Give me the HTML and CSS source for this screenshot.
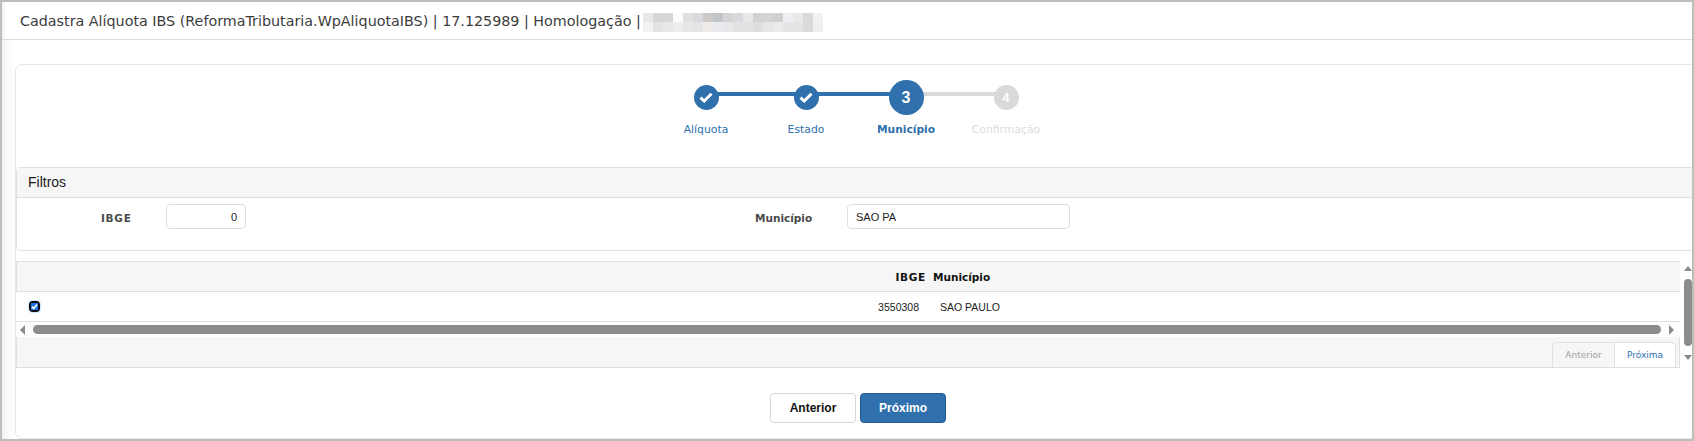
FILE: index.html
```html
<!DOCTYPE html>
<html lang="pt-BR">
<head>
<meta charset="utf-8">
<title>Cadastra Alíquota IBS</title>
<link rel="stylesheet" href="styles.css">
</head>
<body>
<div class="frame">
  <header class="topbar">
    <span class="title">Cadastra Alíquota IBS (ReformaTributaria.WpAliquotaIBS) | 17.125989 | Homologação |</span>
    <span class="redacted"></span>
  </header>
  <main class="content">
    <section class="card">
      <ol class="steps">
        <li class="step done">
          <span class="dot"><svg width="14" height="11" viewBox="0 0 14 11"><path d="M1.5 5.6 5.2 9 12.5 1.8" fill="none" stroke="#fff" stroke-width="3"/></svg></span>
          <span class="step-label">Alíquota</span>
        </li>
        <li class="step done">
          <span class="dot"><svg width="14" height="11" viewBox="0 0 14 11"><path d="M1.5 5.6 5.2 9 12.5 1.8" fill="none" stroke="#fff" stroke-width="3"/></svg></span>
          <span class="step-label">Estado</span>
        </li>
        <li class="step current">
          <span class="dot">3</span>
          <span class="step-label">Município</span>
        </li>
        <li class="step todo">
          <span class="dot">4</span>
          <span class="step-label">Confirmação</span>
        </li>
      </ol>

      <section class="filters">
        <h2 class="filters-title">Filtros</h2>
        <div class="filters-body">
          <label class="field-label label-ibge">IBGE</label>
          <input class="input input-ibge" type="text" value="0">
          <label class="field-label label-mun">Município</label>
          <input class="input input-mun" type="text" value="SAO PA">
        </div>
      </section>

      <div class="grid-wrap">
        <div class="grid">
          <div class="grid-head">
            <span class="col-check"></span>
            <span class="col-ibge">IBGE</span>
            <span class="col-mun">Município</span>
          </div>
          <div class="grid-row">
            <span class="col-check"><span class="check"><svg width="7" height="7" viewBox="0 0 8 8"><rect width="8" height="8" fill="#1a73e8"/><path d="M1 4.2 3.1 6.3 7 1.6" fill="none" stroke="#fff" stroke-width="1.8"/></svg></span></span>
            <span class="col-ibge">3550308</span>
            <span class="col-mun">SAO PAULO</span>
          </div>
          <div class="hscroll">
            <span class="arrow arrow-left"></span>
            <span class="hthumb"></span>
            <span class="arrow arrow-right"></span>
          </div>
          <div class="pager">
            <span class="tab tab-prev">Anterior</span>
            <span class="tab tab-next">Próxima</span>
          </div>
        </div>
        <div class="vscroll">
          <span class="arrow arrow-up"></span>
          <span class="vthumb"></span>
          <span class="arrow arrow-down"></span>
        </div>
      </div>

      <div class="actions">
        <button class="btn btn-default" type="button">Anterior</button>
        <button class="btn btn-primary" type="button">Próximo</button>
      </div>
    </section>
  </main>
</div>
</body>
</html>
```

FILE: styles.css
```css
* { box-sizing: border-box; }
html, body { margin: 0; padding: 0; height: 100%; overflow: hidden; }
body { background: #fff; font-family: "Liberation Sans", Arial, sans-serif; }

.frame {
  width: 1694px;
  height: 441px;
  border: 2px solid #bdbdbd;
  display: flex;
  flex-direction: column;
  overflow: hidden;
  background: #fff;
}

.topbar {
  height: 38px;
  flex: none;
  border-bottom: 1px solid #dcdcdc;
  display: flex;
  align-items: center;
  padding-left: 18px;
  background: linear-gradient(90deg, #f0f0f0, #fff 4px);
}
.title {
  font-family: "DejaVu Sans", Verdana, sans-serif;
  font-size: 14.3px;
  color: #3c3c3c;
  white-space: nowrap;
}
.redacted {
  margin: 3px 0 0 2px;
  width: 180px;
  height: 19px;
  background-color: #eee;
  background-image:
    linear-gradient(90deg, #e8e8e6 0 10px, #d6d6d6 10px 30px, #fdfdfb 30px 40px, #e0e0e0 40px 50px, #d8d9dc 50px 60px, #cdc9c6 60px 70px, #bfc5c9 70px 80px, #d5d4d5 80px 90px, #d8d9dc 90px 100px, #e8e8e6 100px 110px, #d2d2d2 110px 120px, #d4d4d2 120px 130px, #d2d0cf 130px 140px, #eeeff2 140px 150px, #eae8e6 150px 160px, #dcdad9 160px 170px, #eff1f2 170px 180px),
    linear-gradient(90deg, #f2f2f2 0 10px, #e2e4e2 10px 20px, #e8e8e6 20px 30px, #eeeeec 30px 40px, #e6e6e6 40px 50px, #e2e4e6 50px 60px, #f0ece8 60px 70px, #e8eaee 70px 80px, #e8e8ea 80px 90px, #e2e2e2 90px 110px, #dedede 110px 120px, #e6e6e4 120px 130px, #eaeae8 130px 140px, #e6e4e2 140px 160px, #d8dadc 160px 170px, #eef0ee 170px 180px);
  background-size: 100% 9px, 100% 10px;
  background-position: 0 0, 0 9px;
  background-repeat: no-repeat;
}

.content {
  flex: 1;
  min-height: 0;
  padding: 24px 0 0 13px;
  background: linear-gradient(90deg, #f2f2f2, #fafafa 6px, #fff 13px);
}

.card {
  width: 1700px;
  height: 375px;
  background: #fff;
  border: 1px solid #e8e8e8;
  border-radius: 7px;
}

.steps {
  list-style: none;
  margin: 0;
  padding: 20px 0 0 640px;
  height: 102px;
  display: flex;
}
.step {
  width: 100px;
  height: 60px;
  position: relative;
  display: flex;
  flex-direction: column;
  align-items: center;
}
.step::before {
  content: "";
  position: absolute;
  left: -50px;
  top: 7px;
  width: 100px;
  height: 4px;
  background: #2f70ad;
}
.step:first-child::before { display: none; }
.step.todo::before { background: #d9d9d9; }
.dot {
  position: relative;
  z-index: 1;
  width: 25px;
  height: 25px;
  border-radius: 50%;
  background: #2f70ad;
  color: #fff;
  font: bold 12.5px "Liberation Sans", Arial, sans-serif;
  display: flex;
  align-items: center;
  justify-content: center;
  margin-bottom: 13px;
  flex: none;
}
.current .dot {
  width: 35px;
  height: 35px;
  font-size: 16px;
  margin-top: -5px;
  margin-bottom: 8px;
}
.todo .dot { background: #d9d9d9; }
.step-label {
  font-family: "DejaVu Sans", Verdana, sans-serif;
  font-size: 10.8px;
  line-height: 13px;
  color: #2f70ad;
  white-space: nowrap;
}
.current .step-label { font-size: 10.7px; font-weight: bold; }
.todo .step-label { color: #dcdcdc; }

.filters {
  height: 84px;
  border: 1px solid #e0e0e0;
  border-radius: 4px;
}
.filters-title {
  margin: 0;
  height: 30px;
  padding-left: 11px;
  background: #f6f6f6;
  border-bottom: 1px solid #e0e0e0;
  font: normal 14px/28px "Liberation Sans", Arial, sans-serif;
  color: #1a1a1a;
}
.filters-body {
  display: flex;
  align-items: flex-start;
  padding-top: 6px;
}
.field-label {
  font-family: "DejaVu Sans", Verdana, sans-serif;
  font-weight: bold;
  font-size: 10.5px;
  line-height: 25px;
  margin-top: 2px;
  color: #4a4a4a;
}
.label-ibge { margin-left: 84px; width: 31px; letter-spacing: .7px; white-space: nowrap; }
.input {
  height: 25px;
  border: 1px solid #dedede;
  border-radius: 4px;
  background: #fff;
  font: 11px "Liberation Sans", Arial, sans-serif;
  color: #222;
  outline: none;
  padding: 0 8px;
}
.input-ibge { margin-left: 34px; width: 80px; text-align: right; }
.label-mun { margin-left: 509px; width: 58px; }
.input-mun { margin-left: 34px; width: 223px; }

.grid-wrap {
  margin-top: 10px;
  display: flex;
  align-items: flex-start;
}
.grid { width: 1664px; flex: none; }
.grid-head {
  height: 31px;
  display: flex;
  align-items: center;
  background: #f6f6f6;
  border: 1px solid #e0e0e0;
  border-right: 0;
  font: bold 10.5px "DejaVu Sans", Verdana, sans-serif;
  color: #111;
}
.col-check { flex: none; }
.grid-head .col-check { width: 808px; }
.col-ibge { width: 101px; flex: none; text-align: right; white-space: nowrap; }
.grid-head .col-ibge { letter-spacing: .7px; }
.col-mun { white-space: nowrap; }
.grid-head .col-mun { margin-left: 7px; }
.grid-row {
  height: 30px;
  display: flex;
  align-items: center;
  border-bottom: 1px solid #e0e0e0;
  font: 10.5px "Liberation Sans", Arial, sans-serif;
  color: #222;
}
.grid-row .col-check { width: 809px; padding-left: 13px; display: flex; }
.grid-row .col-ibge { padding-right: 7px; }
.grid-row .col-mun { padding-left: 14px; }
.check {
  width: 11px;
  height: 11px;
  border: 2px solid #0b0b14;
  border-radius: 3px;
  outline: 1px solid #cfe6fb;
  display: flex;
  overflow: hidden;
}

.hscroll {
  height: 15px;
  display: flex;
  align-items: center;
  background: #fdfdfd;
}
.arrow { width: 0; height: 0; flex: none; border-style: solid; border-color: transparent; }
.arrow-left { margin-left: 4px; border-width: 5px 5px 5px 0; border-right-color: #8c8c8c; }
.hthumb { margin-left: 8px; width: 1628px; height: 9px; border-radius: 5px; background: #8c8c8c; }
.arrow-right { margin-left: 8px; border-width: 5px 0 5px 5px; border-left-color: #8c8c8c; }

.pager {
  height: 31px;
  background: #f6f6f6;
  border: 1px solid #e0e0e0;
  border-top: 0;
  display: flex;
  justify-content: flex-end;
  align-items: flex-end;
  padding-right: 3px;
}
.tab {
  width: 62px;
  height: 25px;
  display: flex;
  align-items: center;
  justify-content: center;
  border: 1px solid #e0e0e0;
  border-bottom: 0;
  font: 9px "DejaVu Sans", Verdana, sans-serif;
}
.tab-prev { color: #a0a0a0; background: #f6f6f6; border-radius: 5px 0 0 0; border-right: 0; }
.tab-next { color: #2f70ad; background: #fff; border-radius: 0 5px 0 0; }

.vscroll {
  margin-left: 4px;
  height: 106px;
  width: 8px;
  flex: none;
  display: flex;
  flex-direction: column;
  align-items: center;
}
.arrow-up { margin-top: 5px; border-width: 0 4px 5px; border-bottom-color: #8c8c8c; }
.vthumb { margin-top: 8px; width: 8px; height: 67px; border-radius: 4px; background: #8c8c8c; }
.arrow-down { margin-top: 9px; border-width: 5px 4px 0; border-top-color: #8c8c8c; }

.actions {
  display: flex;
  gap: 4px;
  padding: 25px 0 0 754px;
}
.btn {
  width: 86px;
  height: 30px;
  border-radius: 4px;
  font: bold 12px "Liberation Sans", Arial, sans-serif;
  cursor: pointer;
  padding: 0;
}
.btn-default { background: #fff; color: #111; border: 1px solid #d6d6d6; }
.btn-primary { background: #2f70ad; color: #fff; border: 1px solid #22598f; }
```
